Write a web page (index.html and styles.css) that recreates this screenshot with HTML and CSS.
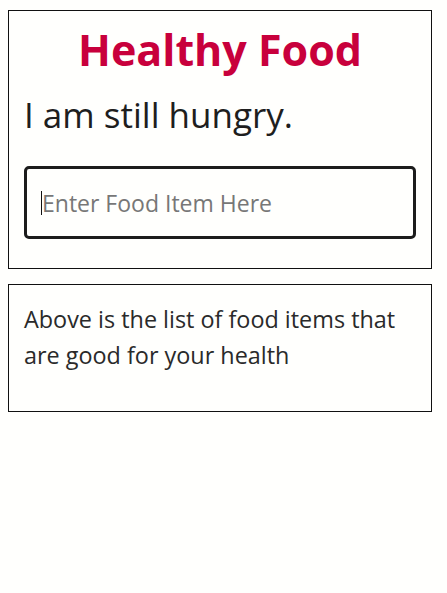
FILE: index.html
```html
<!DOCTYPE html>
<html>
<head>
<meta charset="utf-8">
<link rel="stylesheet" href="styles.css">
</head>
<body>
<div class="card top">
  <h1 class="title">Healthy Food</h1>
  <p class="hungry">I am still hungry.</p>
  <div class="field"><span class="caret"></span><span class="placeholder">Enter Food Item Here</span></div>
</div>
<div class="card info">
  <p class="note">Above is the list of food items that are good for your health</p>
</div>
</body>
</html>
```
FILE: styles.css
```css
html { background: #fffffd; }
body {
  margin: 10px 15px 0 8px;
  font-family: "Open Sans", "DejaVu Sans", sans-serif;
  color: #222;
}
.card {
  border: 1px solid #111;
  padding: 0 15px;
}
.top { padding-bottom: 29px; }
.title {
  margin: 14px 0 0;
  text-align: center;
  font-size: 43px;
  line-height: 50px;
  font-weight: 700;
  color: #c8003c;
}
.hungry {
  margin: 20px 0 0;
  font-size: 35px;
  line-height: 40px;
  color: #1e1e1e;
}
.field {
  margin-top: 31px;
  height: 67px;
  border: 3px solid #1c1c1c;
  border-radius: 5px;
  display: flex;
  align-items: center;
  padding: 0 14px;
}
.caret {
  width: 1px;
  height: 24px;
  background: #111;
  margin-right: 0;
}
.placeholder {
  font-size: 23px;
  color: #777;
}
.info {
  margin-top: 15px;
  height: 126px;
}
.note {
  margin: 16px 0 0;
  font-size: 23.4px;
  line-height: 36px;
  color: #2a2a2a;
}
```
